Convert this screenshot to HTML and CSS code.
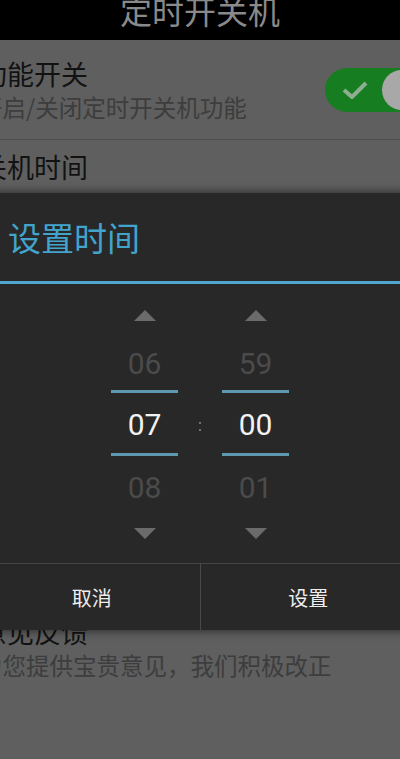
FILE: index.html
```html
<!DOCTYPE html>
<html lang="zh-CN">
<head>
    <meta charset="UTF-8">
    <meta name="viewport" content="width=device-width, initial-scale=1.0">
    <title>定时开关机</title>
    <link rel="stylesheet" href="styles.css">
</head>
<body>
    <div class="topbar">
        <h1>定时开关机</h1>
    </div>

    <ul class="settings">
        <li class="item item-first">
            <div class="item-text">
                <div class="item-title">功能开关</div>
                <div class="item-desc">开启/关闭定时开关机功能</div>
            </div>
            <span class="switch">
                <svg class="switch-check" width="26" height="18" viewBox="0 0 26 18">
                    <path d="M2 9 L10 16 L24 2" fill="none" stroke="#8fae90" stroke-width="4"/>
                </svg>
                <span class="switch-knob"></span>
            </span>
        </li>
        <li class="item">
            <div class="item-text">
                <div class="item-title">关机时间</div>
                <div class="item-desc">23:00</div>
            </div>
        </li>
        <li class="item">
            <div class="item-text">
                <div class="item-title">开机时间</div>
                <div class="item-desc">07:00</div>
            </div>
        </li>
        <li class="item">
            <div class="item-text">
                <div class="item-title">重复</div>
                <div class="item-desc">每天</div>
            </div>
        </li>
        <li class="item">
            <div class="item-text">
                <div class="item-title">检查更新</div>
                <div class="item-desc">当前已是最新版本</div>
            </div>
        </li>
        <li class="item">
            <div class="item-text">
                <div class="item-title">关于</div>
                <div class="item-desc">版本 1.0</div>
            </div>
        </li>
        <li class="item">
            <div class="item-text">
                <div class="item-title">意见反馈</div>
                <div class="item-desc">为您提供宝贵意见，我们积极改正</div>
            </div>
        </li>
    </ul>

    <!-- time dialog, sits over the list -->
    <div class="dialog">
        <div class="dialog-title">设置时间</div>
        <div class="picker">
            <div class="picker-col">
                <div class="arrow arrow-up"></div>
                <div class="num num-dim">06</div>
                <div class="num num-current">07</div>
                <div class="num num-dim">08</div>
                <div class="arrow arrow-down"></div>
            </div>
            <div class="picker-sep">:</div>
            <div class="picker-col">
                <div class="arrow arrow-up"></div>
                <div class="num num-dim">59</div>
                <div class="num num-current">00</div>
                <div class="num num-dim">01</div>
                <div class="arrow arrow-down"></div>
            </div>
        </div>
        <div class="dialog-buttons">
            <button>取消</button>
            <button>设置</button>
        </div>
    </div>
</body>
</html>
```

FILE: styles.css
```css
body {
    margin: 0;
    background-color: #5f5f5f;
    font-family: "Noto Sans CJK SC", sans-serif;
    overflow: hidden;
    position: relative;
    height: 759px;
}
.topbar {
    height: 40px;
    background-color: #000;
    overflow: hidden;
}
.topbar h1 {
    margin: 0;
    font-size: 32px;
    font-weight: 400;
    line-height: 20px;
    color: #8a8a8a;
    text-align: center;
}
.settings {
    list-style: none;
    margin: 0 -24px 0 -20px;
    padding: 0;
}
.item {
    display: flex;
    align-items: center;
    justify-content: space-between;
    padding: 10px 0 16px 0;
    border-bottom: 1px solid #4c4c4c;
}
.item:last-child {
    border-bottom: none;
}
.item-first {
    padding-top: 17px;
}
.item-title {
    font-size: 27px;
    line-height: 34px;
    color: #121212;
}
.item-desc {
    font-size: 23.5px;
    line-height: 32px;
    color: #3d3d3d;
    white-space: nowrap;
    margin-left: -1px;
}
.switch {
    width: 99px;
    height: 44px;
    border-radius: 22px;
    background-color: #177d21;
    display: flex;
    align-items: center;
    justify-content: space-between;
    padding: 0 2px 0 17px;
    box-sizing: border-box;
}
.switch-knob {
    width: 40px;
    height: 40px;
    border-radius: 50%;
    background-color: #a8a8a8;
}
.dialog {
    position: absolute;
    top: 193px;
    left: -16px;
    width: 432px;
    background-color: #282828;
    box-shadow: 0 0 8px 2px rgba(0, 0, 0, 0.45);
}
.dialog-title {
    height: 88px;
    line-height: 88px;
    padding-left: 24px;
    font-size: 33px;
    color: #42a4cd;
    border-bottom: 3px solid #4fa7d0;
}
.picker {
    display: flex;
    justify-content: center;
    padding: 14px 0 17px 0;
}
.picker-col {
    width: 67px;
    display: flex;
    flex-direction: column;
    align-items: center;
}
.picker-sep {
    width: 44px;
    text-align: center;
    align-self: center;
    padding-top: 6px;
    font-family: Roboto, sans-serif;
    font-size: 16px;
    color: #9a9a9a;
}
.arrow {
    width: 0;
    height: 0;
    border-left: 11px solid transparent;
    border-right: 11px solid transparent;
}
.arrow-up {
    border-bottom: 11px solid #6b6b6b;
    margin: 12px 0 13px 0;
}
.arrow-down {
    border-top: 11px solid #6b6b6b;
    margin: 12px 0 7px 0;
}
.num {
    width: 100%;
    height: 56px;
    line-height: 56px;
    padding-top: 2px;
    box-sizing: border-box;
    text-align: center;
    font-family: Roboto, sans-serif;
    font-size: 30px;
}
.num-dim {
    color: #4b4b4b;
}
.num-current {
    height: 66px;
    line-height: 60px;
    color: #f2f2f2;
    border-top: 3px solid #5f98b1;
    border-bottom: 3px solid #5f98b1;
}
.num-current + .num-dim {
    height: 60px;
    line-height: 60px;
}
.dialog-buttons {
    display: flex;
    border-top: 1px solid #444;
}
.dialog-buttons button {
    flex: 1;
    height: 66px;
    background: none;
    border: none;
    font-family: "Noto Sans CJK SC", sans-serif;
    font-size: 20px;
    color: #eeeeee;
}
.dialog-buttons button + button {
    border-left: 1px solid #4a4a4a;
}
```
